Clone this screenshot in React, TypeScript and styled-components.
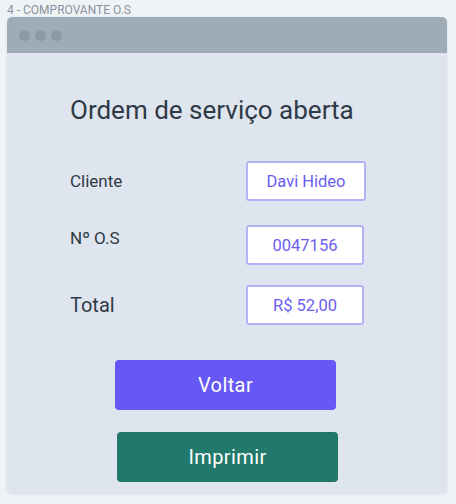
import React from 'react'
import styled, { createGlobalStyle } from 'styled-components'

const GlobalStyle = createGlobalStyle`
  html, body {
    margin: 0;
    padding: 0;
    background: #f0f3f6;
    font-family: Roboto, "Noto Sans", sans-serif;
  }
`

const Page = styled.div`
  width: 456px;
  height: 504px;
  padding: 3px 9px 0 7px;
  box-sizing: border-box;
`

const Caption = styled.div`
  font-size: 12px;
  line-height: 14px;
  color: #8794a1;
`

const Window = styled.div`
  width: 440px;
  height: 476px;
  border-radius: 5px;
  overflow: hidden;
  background: #dfe5ee;
  box-shadow: 0 1px 3px rgba(40, 60, 80, 0.12);
  display: flex;
  flex-direction: column;
`

const TitleBar = styled.div`
  height: 36px;
  background: #9eacb8;
  display: flex;
  align-items: center;
  gap: 5px;
  padding-left: 12px;
`

const Dot = styled.span`
  width: 11px;
  height: 11px;
  border-radius: 50%;
  background: #8c9aa7;
`

const Body = styled.div`
  padding: 42px 0 0 63px;
  display: flex;
  flex-direction: column;
`

const Title = styled.h1`
  margin: 0 0 36px;
  font-size: 26px;
  line-height: 30px;
  font-weight: 400;
  color: #2e3a46;
`

const Fields = styled.div`
  display: flex;
  flex-direction: column;
`

const Row = styled.div<{ $gap?: number }>`
  display: flex;
  align-items: center;
  margin-top: ${p => p.$gap ?? 0}px;
`

const Label = styled.div<{ $size: number; $shift?: number }>`
  width: 176px;
  font-size: ${p => p.$size}px;
  color: #2e3a46;
  transform: translateY(${p => p.$shift ?? 0}px);
`

const Value = styled.div<{ $w: number }>`
  width: ${p => p.$w}px;
  height: 40px;
  box-sizing: border-box;
  border: 2px solid #b4b1f4;
  border-radius: 3px;
  background: #ffffff;
  color: #6a5ef0;
  font-size: 16.5px;
  display: flex;
  align-items: center;
  justify-content: center;
`

const Actions = styled.div`
  display: flex;
  flex-direction: column;
  gap: 22px;
  margin-top: 35px;
  padding-left: 45px;
`

const Button = styled.div<{ $bg: string; $offset?: number }>`
  width: 221px;
  height: 50px;
  border-radius: 4px;
  background: ${p => p.$bg};
  color: #ffffff;
  font-size: 20px;
  letter-spacing: 0.4px;
  display: flex;
  align-items: center;
  justify-content: center;
  margin-left: ${p => p.$offset ?? 0}px;
`

export default function App() {
  return (
    <>
      <GlobalStyle />
      <Page>
        <Caption>4 - COMPROVANTE O.S</Caption>
        <Window>
          <TitleBar>
            <Dot />
            <Dot />
            <Dot />
          </TitleBar>
          <Body>
            <Title>Ordem de serviço aberta</Title>
            <Fields>
              <Row>
                <Label $size={17}>Cliente</Label>
                <Value $w={120}>Davi Hideo</Value>
              </Row>
              <Row $gap={24}>
                <Label $size={17} $shift={-7}>Nº O.S</Label>
                <Value $w={118}>0047156</Value>
              </Row>
              <Row $gap={20}>
                <Label $size={20}>Total</Label>
                <Value $w={118}>R$ 52,00</Value>
              </Row>
            </Fields>
            <Actions>
              <Button $bg="#6658f5">Voltar</Button>
              <Button $bg="#20796a" $offset={2}>Imprimir</Button>
            </Actions>
          </Body>
        </Window>
      </Page>
    </>
  )
}
